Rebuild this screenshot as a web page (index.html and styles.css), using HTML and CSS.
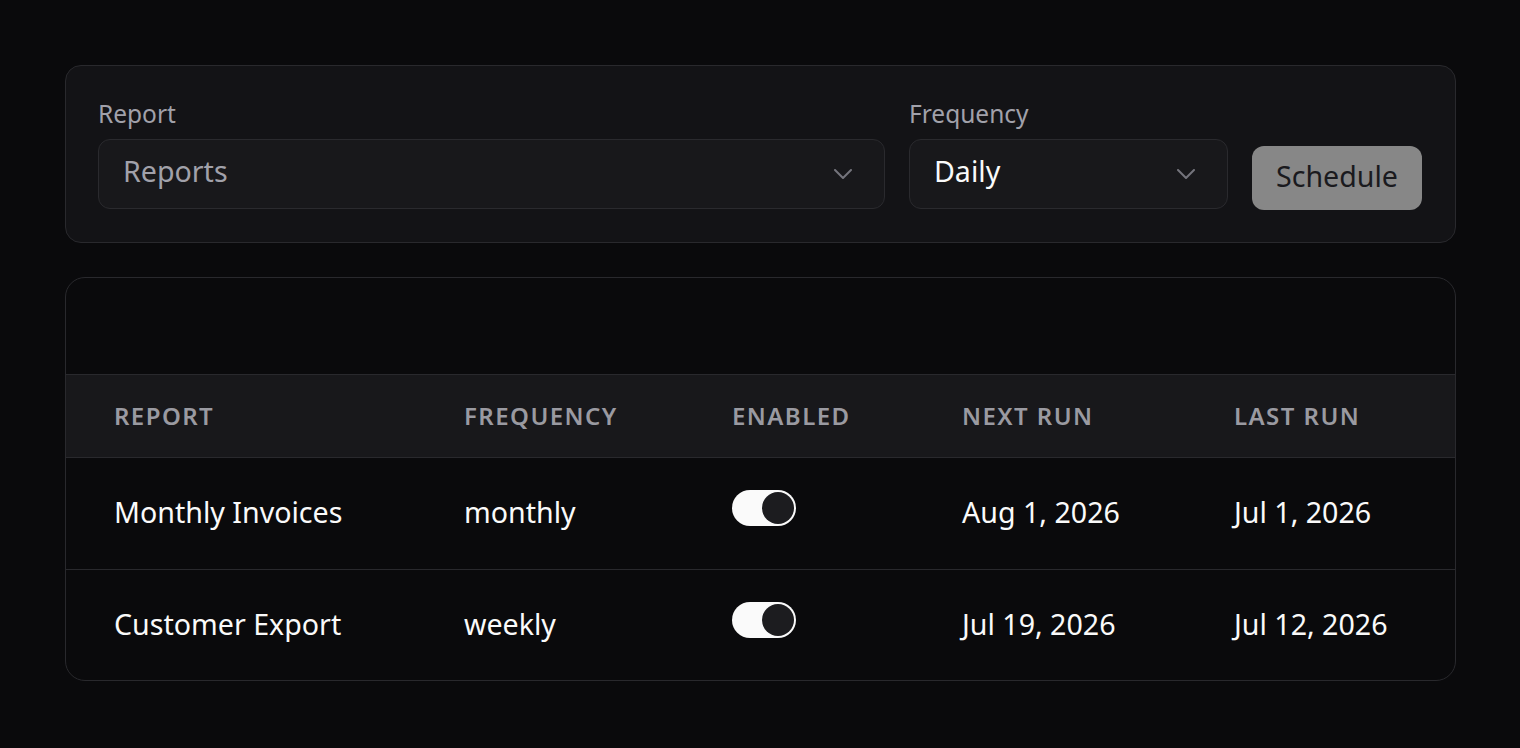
FILE: index.html
```html
<!DOCTYPE html>
<html lang="en">
<head>
    <meta charset="UTF-8">
    <meta name="viewport" content="width=device-width, initial-scale=1.0">
    <title>Scheduled Reports</title>
    <link rel="stylesheet" href="styles.css">
</head>
<body>
    <div class="page">
        <div class="card schedule-form">
            <div class="field field-report">
                <label class="field-label">Report</label>
                <div class="select placeholder">
                    <span>Reports</span>
                    <svg class="chevron" width="18" height="10" viewBox="0 0 18 10"><polyline points="1,1 9,9 17,1" /></svg>
                </div>
            </div>
            <div class="field field-frequency">
                <label class="field-label">Frequency</label>
                <div class="select">
                    <span>Daily</span>
                    <svg class="chevron" width="18" height="10" viewBox="0 0 18 10"><polyline points="1,1 9,9 17,1" /></svg>
                </div>
            </div>
            <button class="schedule-button" disabled>Schedule</button>
        </div>

        <div class="card table-card">
            <div class="table-toolbar"></div>
            <table class="schedule-table">
                <colgroup>
                    <col class="col-report">
                    <col class="col-frequency">
                    <col class="col-enabled">
                    <col class="col-next">
                    <col>
                </colgroup>
                <thead>
                    <tr>
                        <th>Report</th>
                        <th>Frequency</th>
                        <th>Enabled</th>
                        <th>Next Run</th>
                        <th>Last Run</th>
                    </tr>
                </thead>
                <tbody>
                    <tr>
                        <td>Monthly Invoices</td>
                        <td>monthly</td>
                        <td><span class="toggle on"><span class="knob"></span></span></td>
                        <td>Aug 1, 2026</td>
                        <td>Jul 1, 2026</td>
                    </tr>
                    <tr>
                        <td>Customer Export</td>
                        <td>weekly</td>
                        <td><span class="toggle on"><span class="knob"></span></span></td>
                        <td>Jul 19, 2026</td>
                        <td>Jul 12, 2026</td>
                    </tr>
                </tbody>
            </table>
        </div>
    </div>
</body>
</html>
```

FILE: styles.css
```css
* {
    box-sizing: border-box;
}
body {
    margin: 0;
    background-color: #0a0a0c;
    font-family: "Noto Sans", "Open Sans", sans-serif;
    color: #fafafa;
}
.page {
    padding: 65px 64px 0 65px;
}
.card {
    border: 1px solid #29292d;
    border-radius: 16px;
}
.schedule-form {
    display: flex;
    align-items: flex-end;
    gap: 24px;
    padding: 32px 33px 33px 32px;
    background-color: #131316;
}
.field {
    display: flex;
    flex-direction: column;
    gap: 7px;
}
.field-report {
    flex: 1;
}
.field-frequency {
    width: 319px;
}
.field-label {
    font-size: 24.5px;
    line-height: 32px;
    padding-bottom: 2px;
    color: #a1a1aa;
}
.select {
    height: 70px;
    display: flex;
    align-items: center;
    justify-content: space-between;
    padding: 0 32px 7px 24px;
    background-color: #18181b;
    border: 1px solid #2a2a2e;
    border-radius: 12px;
    font-size: 28.6px;
    color: #fafafa;
}
.select.placeholder {
    color: #a1a1aa;
}
.chevron {
    fill: none;
    stroke: #74747c;
    stroke-width: 2;
    stroke-linecap: round;
    stroke-linejoin: round;
    margin-top: 7px;
}
.schedule-button {
    width: 170px;
    height: 64px;
    margin-bottom: -1px;
    border: none;
    border-radius: 12px;
    background-color: #878787;
    color: #1a1a1e;
    font-family: inherit;
    font-size: 28.6px;
    padding: 0 0 5px;
}
.table-card {
    margin-top: 34px;
    border-radius: 20px;
    overflow: hidden;
    background-color: #0a0a0c;
}
.table-toolbar {
    height: 97px;
    border-bottom: 1px solid #29292d;
}
.schedule-table {
    width: 100%;
    border-collapse: collapse;
    table-layout: fixed;
}
.col-report {
    width: 350px;
}
.col-frequency {
    width: 268px;
}
.col-enabled {
    width: 230px;
}
.col-next {
    width: 272px;
}
.schedule-table th {
    height: 82px;
    padding: 0 0 0 48px;
    text-align: left;
    background-color: #18181b;
    border-bottom: 1px solid #29292d;
    font-size: 24px;
    font-weight: 600;
    letter-spacing: 0.06em;
    text-transform: uppercase;
    color: #9a9aa1;
}
.schedule-table td {
    height: 112px;
    padding: 0 0 3px 48px;
    border-bottom: 1px solid #29292d;
    font-size: 28.6px;
    color: #fafafa;
    white-space: nowrap;
}
.schedule-table tbody tr:last-child td {
    border-bottom: none;
    height: 111px;
}
.toggle {
    display: inline-flex;
    align-items: center;
    width: 64px;
    height: 36px;
    padding: 2px;
    border-radius: 18px;
    background-color: #fafafa;
    vertical-align: middle;
    position: relative;
    top: -6px;
}
.toggle.on {
    justify-content: flex-end;
}
.knob {
    width: 32px;
    height: 32px;
    border-radius: 50%;
    background-color: #1c1c1f;
}
```
